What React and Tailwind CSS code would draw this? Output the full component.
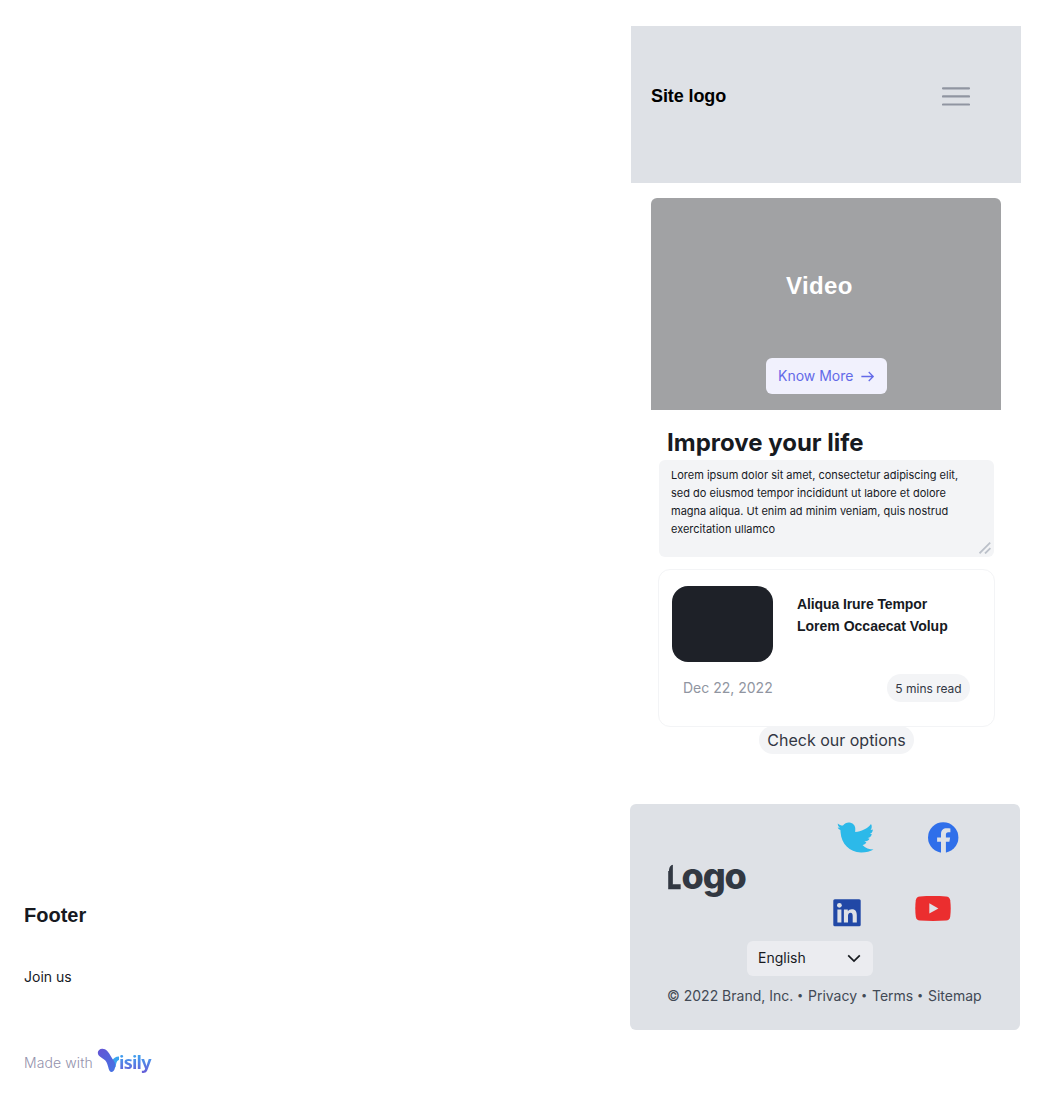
import React from "react";

function Menu() {
  return (
    <svg className="h-7 w-7" viewBox="0 0 28 28" fill="none" stroke="#9095a1" strokeWidth="2.2" strokeLinecap="round">
      <path d="M1 5.3H27M1 13.4H27M1 21.5H27" />
    </svg>
  );
}

function Header() {
  return (
    <header className="mt-[26px] ml-[0.5px] flex h-[157px] w-[390.9px] justify-between bg-[#dee1e6] pr-[51.5px] pl-[20.5px]">
      <div className="mt-[56px] h-7 w-[76px] font-['Liberation_Sans'] text-[18px] leading-7 font-bold tracking-[-0.1px] whitespace-nowrap text-black">
        Site logo
      </div>
      <button className="mt-[57px] h-7 w-7">
        <Menu />
      </button>
    </header>
  );
}

function Video() {
  return (
    <section className="mt-[15px] ml-[21px] h-[212px] w-[350px] rounded-t-md bg-[#a1a2a4] pt-[70px]">
      <h2 className="ml-[135px] w-[70px] font-['Liberation_Sans'] text-2xl leading-9 font-bold tracking-[0.35px] text-white">Video</h2>
      <button className="mt-[54px] ml-[115px] flex h-9 w-[121px] items-center rounded-md bg-[#f1f1fd] pl-3 text-sm text-[#636ae8]">
        <span className="whitespace-nowrap">Know More</span>
        <svg className="ml-[7px] h-4 w-4" viewBox="0 0 16 16" fill="none" stroke="#636ae8" strokeWidth="1.3" strokeLinecap="square">
          <path d="M2 8.5H13M9.2 4.5L13.2 8.5L9.2 12.5" />
        </svg>
      </button>
    </section>
  );
}

function Article() {
  return (
    <article className="mt-3 ml-[28px] h-[158px] w-[337px] rounded-xl border border-[#f3f4f6] bg-white pt-4 pl-[13px]">
      <div className="flex">
        <div className="h-[76px] w-[101px] rounded-2xl bg-[#1e2128]" />
        <h3 className="mt-[7px] ml-6 font-['Liberation_Sans'] text-sm leading-[22px] font-bold whitespace-nowrap text-[#171a1f]">
          <span className="tracking-[-0.1px]">Aliqua Irure Tempor</span>
          <br />
          Lorem Occaecat Volup
        </h3>
      </div>
      <div className="mt-3 flex items-center justify-between pr-[24px] pl-[11px]">
        <span className="text-sm text-[#9095a1]">Dec 22, 2022</span>
        <span className="flex h-7 w-[83px] items-center justify-center rounded-full bg-[#f3f4f6] pt-px text-xs text-[#323743]">5 mins read</span>
      </div>
    </article>
  );
}

function Twitter() {
  return (
    <svg className="h-[31px] w-[37px]" viewBox="0 0 37 31" fill="#2cb9e9">
      <path d="M0.8 1.5C2.8 3.2 4.6 3.8 6 3.5C7.6 1.3 9.8 0.2 12.4 0.4C16 0.7 18.5 3.6 18.3 7L18.2 9.9C24.4 9.4 30.5 6.7 34 1.9C35.3 4 34.8 6.4 33.6 8.1L35.8 7.4C36 9.7 34.3 11.3 32.6 12.1L34.8 12C34.3 14.5 32.4 15.9 30.4 16.1L32.6 16.7C31.4 18.7 29.4 19.4 27.4 19.3L29.4 20.5C28.4 22 27 22.7 25.5 22.9C28.2 25.8 32.5 27.5 36.5 27.5C33.3 29.4 28.7 30.6 23.9 30.5C12.5 30.3 4.3 21.8 3.6 10.6L3.4 8.1C2 7.6 1.2 6.7 0.7 5.6L2.9 5.7C1.5 4.7 0.6 3.3 0.8 1.5Z" />
    </svg>
  );
}

function Facebook() {
  return (
    <svg className="h-[31px] w-[31px]" viewBox="0 0 31 31">
      <circle cx="15.2" cy="15.5" r="15.2" fill="#2f6fea" />
      <path fill="#dee1e6" d="M13 31V19.7H9.1V15.5H13V12.2C13 8.1 15.2 6.2 18.7 6.2C20.2 6.2 21.5 6.4 22.4 6.6V10.3H20.3C18.5 10.3 17.9 11.2 17.9 12.7V15.5H22.1L21.4 19.7H17.9V31Z" />
    </svg>
  );
}

function LinkedIn() {
  return (
    <svg className="h-7 w-7" viewBox="0 0 28 28">
      <rect x="0.3" y="0.2" width="27.4" height="27" rx="1.5" fill="#2148a6" />
      <path fill="#dee1e6" d="M4.4 10.5H8.4V23.4H4.4ZM10.9 10.5H14.8V12.3C15.5 11.1 17 10.2 18.9 10.2C22.8 10.2 23.8 12.8 23.8 16.3V23.4H19.7V17.1C19.7 15.1 19.2 13.8 17.5 13.8C15.7 13.8 15 15.1 15 17V23.4H10.9Z" />
      <circle cx="6.4" cy="6.3" r="2.4" fill="#dee1e6" />
    </svg>
  );
}

function YouTube() {
  return (
    <svg className="h-[25px] w-9" viewBox="0 0 36 25">
      <path fill="#eb2e2f" d="M5 0.5C13 -0.1 23 -0.1 31 0.5C33.5 0.7 34.8 2 35.2 4.3C35.9 9.5 35.9 15.5 35.2 20.7C34.8 23 33.5 24.3 31 24.5C23 25.1 13 25.1 5 24.5C2.5 24.3 1.2 23 0.8 20.7C0.1 15.5 0.1 9.5 0.8 4.3C1.2 2 2.5 0.7 5 0.5Z" />
      <path fill="#dee1e6" d="M14.3 7.2V17.6L23.4 12.4Z" />
    </svg>
  );
}

function BrandLogo() {
  return (
    <div className="relative mt-[34px] ml-[37px] h-[40px] w-[81px] text-[36px] leading-[40px] font-extrabold tracking-[-1.1px] whitespace-nowrap text-[#323842]">
      <span className="inline-block w-[14.5px] origin-left scale-x-[0.78] text-[32px] tracking-normal [-webkit-text-stroke:0.6px_#323842]">L</span>ogo
      <svg className="absolute top-[7px] left-0 h-[8px] w-[8px]" viewBox="0 0 8 8">
        <path fill="#dee1e6" d="M0 0H8V1C5 1 2 3 2 8H0Z" />
      </svg>
    </div>
  );
}

function SiteFooter() {
  return (
    <footer className="mt-[50px] h-[226px] w-[390px] rounded-md bg-[#dee1e6] pt-[18px]">
      <div className="flex h-[119px]">
        <BrandLogo />
        <div className="ml-[85px] grid h-[105px] grid-cols-[82px_44px] grid-rows-[74px_31px]">
          <div className="ml-[4.4px]"><Twitter /></div>
          <div className="ml-[12.5px]"><Facebook /></div>
          <div className="mt-[3px]"><LinkedIn /></div>
          <div><YouTube /></div>
        </div>
      </div>
      <div className="ml-[116.5px] flex h-[35px] w-[126.9px] items-center justify-between rounded-md bg-[#ebecf0] pr-[11px] pb-px pl-[11.5px] text-sm text-[#171a1f]">
        English
        <svg className="h-4 w-4" viewBox="0 0 16 16" fill="none" stroke="#171a1f" strokeWidth="1.7">
          <path d="M2.2 5.4L8 11.1L13.8 5.4" />
        </svg>
      </div>
      <div className="mt-[9px] ml-[37px] flex h-[22px] items-center text-sm whitespace-nowrap text-[#424955]">
        <span className="w-[126px]">© 2022 Brand, Inc.</span>
        <span className="w-[15px] pl-1 text-[11px]">•</span>
        <span className="w-[49px]">Privacy</span>
        <span className="w-[15px] pl-1 text-[11px]">•</span>
        <span className="w-[41px]">Terms</span>
        <span className="w-[15px] pl-1 text-[11px]">•</span>
        <span>Sitemap</span>
      </div>
    </footer>
  );
}

function Visily() {
  return (
    <div className="flex h-7 items-start">
      <svg className="h-[26px] w-6" viewBox="0 0 24 26">
        <defs>
          <linearGradient id="stem" x1="0" y1="0" x2="0.7" y2="1">
            <stop offset="0" stopColor="#6554d4" />
            <stop offset="1" stopColor="#4770e2" />
          </linearGradient>
        </defs>
        <path fill="#3aa4ee" d="M14.5 22C13.5 15.5 15 8.4 22 8.4V12C19.8 12.4 19.4 14.5 18.6 19Z" />
        <path fill="url(#stem)" d="M5.2 0.8C9 0.7 11.8 4.2 14 8.6C15.4 11.2 17.8 13.6 18.4 16.6C18.2 20.4 17.2 24 14.6 24C11.4 24 11.8 18.4 9.4 14C7.2 10 0.8 9.2 0.8 4.8C0.8 2.5 2.8 0.8 5.2 0.8Z" />
      </svg>
      <span className="-ml-[2px] bg-linear-to-b from-[#3f9cee] from-30% to-[#6552d4] to-95% bg-clip-text pr-1 font-['Noto_Sans'] text-[18px] leading-7 font-bold tracking-[-0.75px] text-transparent">isily</span>
    </div>
  );
}

export default function App() {
  return (
    <main className="flex h-[1095px] w-[1047px] overflow-hidden bg-white font-[Inter,sans-serif]">
      <aside className="flex w-[630px] flex-col pt-[900px] pl-6 text-[#171a1f]">
        <h2 className="font-['Liberation_Sans'] text-xl leading-[30px] font-bold">Footer</h2>
        <a className="mt-[36px] text-sm leading-[22px]">Join us</a>
        <div className="mt-[60px] flex">
          <span className="mt-[4px] w-[73px] text-sm leading-[22px] font-light tracking-[0.1px] whitespace-nowrap text-[#9492ac]">Made with</span>
          <Visily />
        </div>
      </aside>
      <div className="flex w-[392px] flex-col">
        <Header />
        <Video />
        <h1 className="mt-[15px] ml-[37px] h-[35px] text-2xl leading-9 font-bold whitespace-nowrap text-[#171a1f]">Improve your life</h1>
        <div className="ml-[29px] flex h-[97px] w-[335px] justify-between rounded-md bg-[#f3f4f6] pt-1.5 pr-[3px] pl-3">
          <p className="text-[11px] leading-[18px] whitespace-nowrap text-[#171a1f]">
            Lorem ipsum dolor sit amet, consectetur adipiscing elit,
            <br />
            sed do eiusmod tempor incididunt ut labore et dolore
            <br />
            magna aliqua. Ut enim ad minim veniam, quis nostrud
            <br />
            exercitation ullamco
          </p>
          <svg className="mt-[76px] h-3 w-3" viewBox="0 0 12 12" fill="none" stroke="#bcc1ca" strokeWidth="1.8">
            <path d="M0.5 11.3L11.2 0.7M6 11.5L11.4 6.2" />
          </svg>
        </div>
        <Article />
        <button className="-mt-px ml-[129px] flex h-7 w-[155px] items-center justify-center rounded-full bg-[#f3f4f6] text-base whitespace-nowrap text-[#323743]">
          Check our options
        </button>
        <SiteFooter />
      </div>
    </main>
  );
}
